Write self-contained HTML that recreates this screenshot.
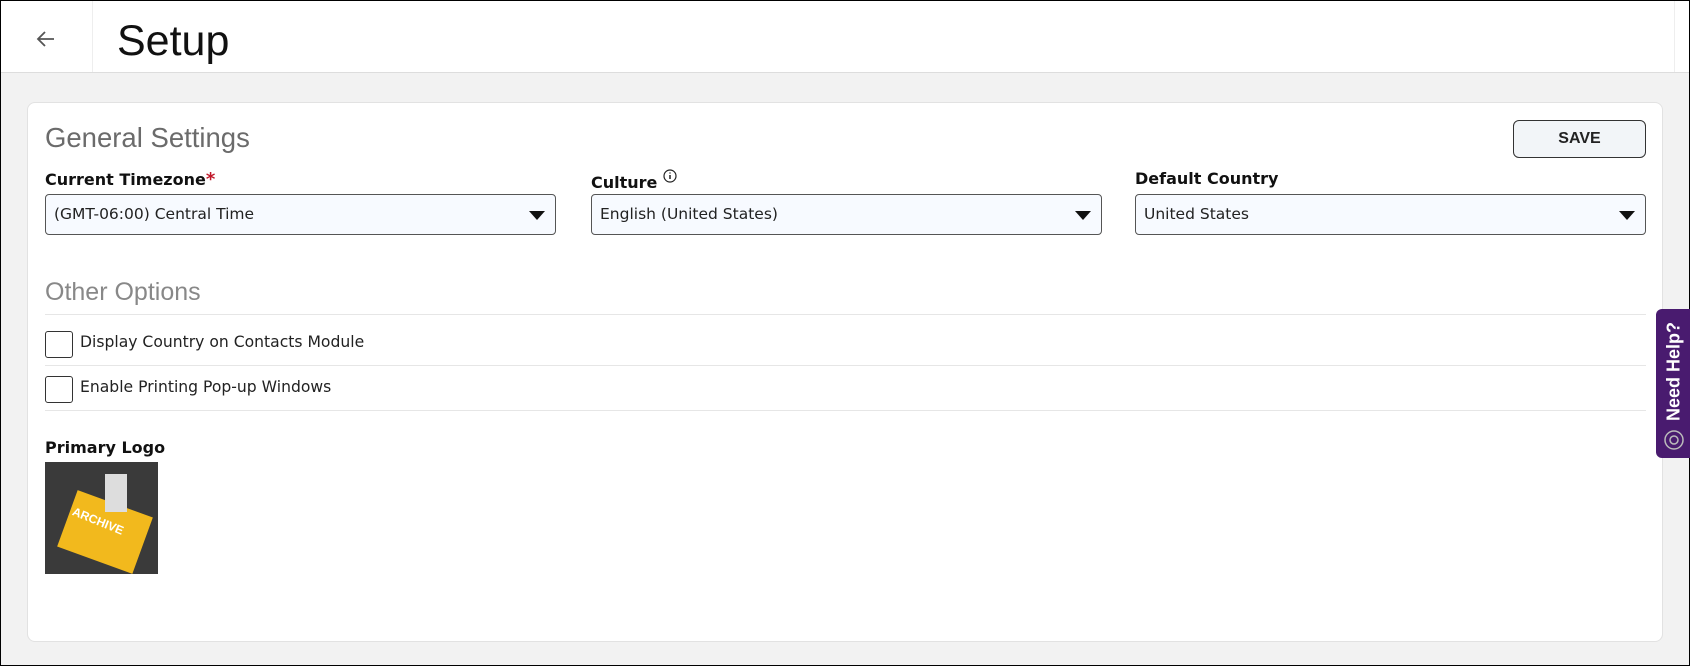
<!DOCTYPE html>
<html><head><style>
*{box-sizing:border-box;margin:0;padding:0}
body{width:1690px;height:666px;overflow:hidden;background:#f2f2f2;font-family:"DejaVu Sans",sans-serif;position:relative;border:1px solid #000}
.hdr{position:absolute;left:0;top:0;width:1688px;height:72px;background:#fff;border-bottom:1px solid #ddd}
.vl{position:absolute;top:0;height:71px;width:1px;background:#eee}
.card{position:absolute;left:26px;top:101px;width:1636px;height:540px;background:#fff;border:1px solid #e2e2e2;border-radius:8px}
.abs{position:absolute}
.lbl{font-size:16px;font-weight:bold;color:#111}
.sel{position:absolute;top:193px;width:511px;height:41px;border:1px solid #555;border-radius:4px;background:#f7faff;font-size:15.5px;color:#222;padding:10px 0 0 8px}
.sel:after{content:"";position:absolute;right:10px;top:16px;border-left:8px solid transparent;border-right:8px solid transparent;border-top:9px solid #111}
.cb{position:absolute;left:44px;width:28px;height:27px;border:1px solid #333;border-radius:3px;background:#fff}
.hl{position:absolute;left:44px;width:1601px;height:1px;background:#e6e6e6}
.opt{position:absolute;left:79px;font-size:15.6px;color:#222}
</style></head><body>
<div class="hdr">
 <svg class="abs" style="left:35px;top:29px" width="20" height="18" viewBox="0 0 20 18"><path d="M18 9H3M9 2L2 9l7 7" fill="none" stroke="#555" stroke-width="1.8"/></svg>
 <div class="vl" style="left:91px"></div>
 <div class="vl" style="left:1673px"></div>
 <div class="abs" style="left:116px;top:16px;font-size:43px;color:#111;font-family:'Liberation Sans',sans-serif">Setup</div>
</div>
<div class="card"></div>
<div class="abs" style="left:44px;top:121px;font-size:27.5px;color:#6b6b6b;font-family:'Liberation Sans',sans-serif">General Settings</div>
<div class="abs" style="left:1512px;top:119px;width:133px;height:38px;border:1px solid #333;border-radius:6px;background:#f2f5f8;font-weight:bold;font-size:16px;text-align:center;line-height:36px;color:#222;font-family:'Liberation Sans',sans-serif">SAVE</div>
<div class="abs lbl" style="left:44px;top:168px">Current Timezone<span style="color:#c0182a;font-size:18px">*</span></div>
<div class="abs lbl" style="left:590px;top:168px">Culture <svg width="14" height="14" viewBox="0 0 14 14" style="vertical-align:5px"><circle cx="7" cy="7" r="6" fill="none" stroke="#222" stroke-width="1.2"/><path d="M7 6v4M7 3.5v1" stroke="#222" stroke-width="1.5"/></svg></div>
<div class="abs lbl" style="left:1134px;top:168px">Default Country</div>
<div class="sel" style="left:44px">(GMT-06:00) Central Time</div>
<div class="sel" style="left:590px">English (United States)</div>
<div class="sel" style="left:1134px">United States</div>
<div class="abs" style="left:44px;top:277px;font-size:25px;color:#888;font-family:'Liberation Sans',sans-serif">Other Options</div>
<div class="hl" style="top:313px"></div>
<div class="cb" style="top:330px"></div><div class="opt" style="top:332px">Display Country on Contacts Module</div>
<div class="hl" style="top:364px"></div>
<div class="cb" style="top:375px"></div><div class="opt" style="top:377px">Enable Printing Pop-up Windows</div>
<div class="hl" style="top:409px"></div>
<div class="abs lbl" style="left:44px;top:437px">Primary Logo</div>
<div class="abs" style="left:44px;top:461px;width:113px;height:112px;background:#3a3a3a;overflow:hidden">
 <div class="abs" style="left:20px;top:40px;width:80px;height:60px;background:#f2b91d;transform:rotate(20deg)"></div>
 <div class="abs" style="left:60px;top:12px;width:22px;height:38px;background:#ddd"></div>
 <div class="abs" style="left:26px;top:52px;font-size:12px;font-weight:bold;color:#fff;transform:rotate(22deg);font-family:'Liberation Sans',sans-serif">ARCHIVE</div>
</div>
<div class="abs" style="left:1655px;top:308px;width:35px;height:149px;background:#491b6f;border-radius:6px 0 0 6px">
 <div class="abs" style="left:-42px;top:52px;width:120px;transform:rotate(-90deg);color:#fff;font-weight:bold;font-size:18px;text-align:center;font-family:'Liberation Sans',sans-serif">Need Help?</div>
 <svg class="abs" style="left:7px;top:120px" width="22" height="22" viewBox="0 0 22 22"><circle cx="11" cy="11" r="9" fill="none" stroke="#bbb" stroke-width="1.5"/><circle cx="11" cy="11" r="4" fill="none" stroke="#bbb" stroke-width="1.5"/></svg>
</div>
</body></html>
